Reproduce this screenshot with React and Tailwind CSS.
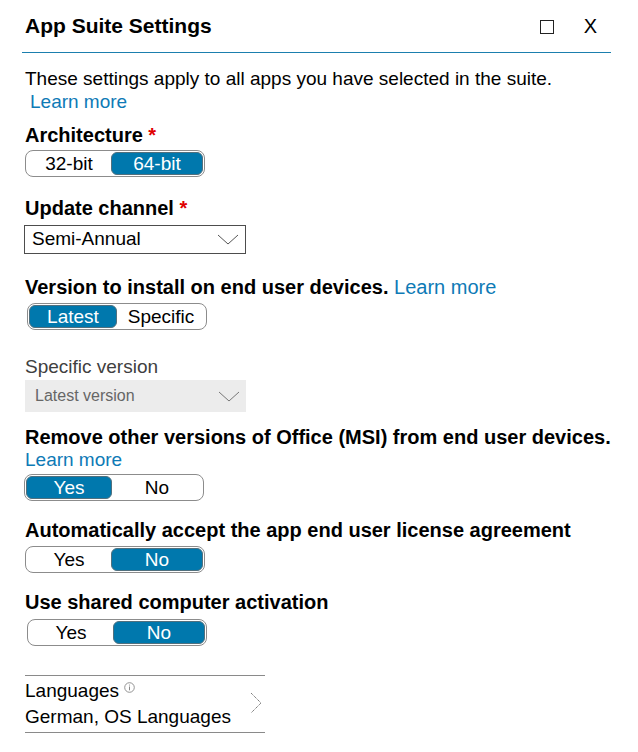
import React from "react";

const Toggle = ({ left, right, selected, offset = "ml-0", leftW = "w-[84px]" }) => {
    const on = "bg-[#0078ad] text-white border border-[#51707e] rounded-[6px]";
    return (
        <div className={`${offset} w-[180px] h-[27px] rounded-[8px] border border-[#8c8c8c] p-[1px] flex text-[19px] leading-none`}>
            <div className={`${leftW} flex items-center justify-center ${selected === 0 ? on : "text-black"}`}>{left}</div>
            <div className={`flex-1 flex items-center justify-center ${selected === 1 ? on : "text-black"}`}>{right}</div>
        </div>
    );
};

const Chevron = ({ color = "#555" }) => (
    <svg width="22" height="11" viewBox="0 0 22 11" fill="none">
        <path d="M1 1 L11 10 L21 1" stroke={color} strokeWidth="1" />
    </svg>
);

const Req = () => <span className="text-[#e00000]"> *</span>;

export default function App() {
    return (
        <div className="w-[638px] h-[752px] bg-white text-black overflow-hidden" style={{ fontFamily: '"Liberation Sans", Arial, sans-serif' }}>
            {/** header */}
            <div className="ml-[22px] w-[589px] h-[53px] border-b border-[#1b7fae] flex items-center pl-[3px]">
                <h1 className="text-[21px] font-bold flex-1">App Suite Settings</h1>
                <div className="w-[14px] h-[14px] border-[1.5px] border-[#222] mr-[30px] mt-[1px]"></div>
                <div className="text-[20px] mr-[14px] leading-none">X</div>
            </div>

            <div className="pl-[25px] flex flex-col items-start">
                <p className="mt-[14px] text-[19px] leading-[23px]">These settings apply to all apps you have selected in the suite.</p>
                <a className="pl-[5px] text-[19px] leading-[23px] text-[#0e7ab6]">Learn more</a>

                <h3 className="mt-[11px] text-[20px] font-bold leading-[23px]">Architecture<Req /></h3>
                <div className="mt-[3px]">
                    <Toggle left="32-bit" right="64-bit" selected={1} />
                </div>

                <h3 className="mt-[20px] text-[20px] font-bold leading-[23px]">Update channel<Req /></h3>
                <div className="mt-[5px] -ml-[1px] w-[222px] h-[29px] border border-[#4d4d4d] flex items-center justify-between pl-[7px] pr-[6px] text-[19px]">
                    <span>Semi-Annual</span>
                    <Chevron />
                </div>

                <h3 className="mt-[22px] text-[20px] font-bold leading-[23px]">
                    Version to install on end user devices. <span className="font-normal text-[#0e7ab6]">Learn more</span>
                </h3>
                <div className="mt-[4px]">
                    <Toggle left="Latest" right="Specific" selected={0} offset="ml-[2px]" leftW="w-[88px]" />
                </div>

                <p className="mt-[25px] text-[19px] leading-[23px] text-[#404040]">Specific version</p>
                <div className="mt-[2px] w-[221px] h-[32px] bg-[#ececec] flex items-center justify-between pl-[10px] pr-[6px] text-[16px] text-[#666]">
                    <span>Latest version</span>
                    <Chevron color="#777" />
                </div>

                <h3 className="mt-[14px] text-[20px] font-bold leading-[23px]">Remove other versions of Office (MSI) from end user devices.</h3>
                <a className="text-[19px] leading-[22px] text-[#0e7ab6]">Learn more</a>
                <div className="mt-[3px]">
                    <Toggle left="Yes" right="No" selected={0} offset="-ml-[1px]" leftW="w-[86px]" />
                </div>

                <h3 className="mt-[18px] text-[20px] font-bold leading-[23px]">Automatically accept the app end user license agreement</h3>
                <div className="mt-[4px]">
                    <Toggle left="Yes" right="No" selected={1} />
                </div>

                <h3 className="mt-[18px] text-[20px] font-bold leading-[23px]">Use shared computer activation</h3>
                <div className="mt-[5px]">
                    <Toggle left="Yes" right="No" selected={1} offset="ml-[2px]" />
                </div>

                {/** languages */}
                <div className="mt-[29px] w-[240px] border-t border-b border-[#8a8a8a] flex items-center justify-between pt-[2px] pb-[2px]">
                    <div className="text-[19px] leading-[26px]">
                        <div className="flex items-start">
                            Languages
                            <svg className="ml-[5px] mt-[4px]" width="11" height="11" viewBox="0 0 11 11" fill="none">
                                <circle cx="5.5" cy="5.5" r="4.8" stroke="#888" strokeWidth="0.9" />
                                <path d="M5.5 4.5 V8.3" stroke="#888" strokeWidth="1" />
                                <circle cx="5.5" cy="3" r="0.6" fill="#888" />
                            </svg>
                        </div>
                        <div>German, OS Languages</div>
                    </div>
                    <svg className="mr-[3px] mt-[-2px]" width="12" height="22" viewBox="0 0 12 22" fill="none">
                        <path d="M1 1 L11 11 L1 21" stroke="#666" strokeWidth="1" strokeDasharray="1.2 0.8" />
                    </svg>
                </div>
            </div>
        </div>
    );
}
